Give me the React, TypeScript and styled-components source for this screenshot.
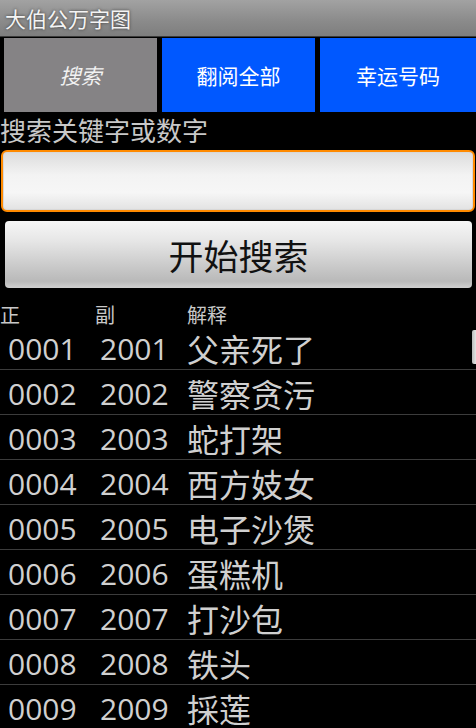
import { FC } from 'react';
import styled, { createGlobalStyle, css } from 'styled-components';

interface IEntry {
  main: string;
  sub: string;
  meaning: string;
}

const entries: IEntry[] = [
  { main: '0001', sub: '2001', meaning: '父亲死了' },
  { main: '0002', sub: '2002', meaning: '警察贪污' },
  { main: '0003', sub: '2003', meaning: '蛇打架' },
  { main: '0004', sub: '2004', meaning: '西方妓女' },
  { main: '0005', sub: '2005', meaning: '电子沙煲' },
  { main: '0006', sub: '2006', meaning: '蛋糕机' },
  { main: '0007', sub: '2007', meaning: '打沙包' },
  { main: '0008', sub: '2008', meaning: '铁头' },
  { main: '0009', sub: '2009', meaning: '採莲' },
];

const tabs = [
  { id: 'search', title: '搜索', active: true },
  { id: 'browse', title: '翻阅全部', active: false },
  { id: 'lucky', title: '幸运号码', active: false },
];

const GlobalStyle = createGlobalStyle`
  html, body {
    margin: 0;
    padding: 0;
    background: #000;
  }
  body {
    font-family: "Open Sans", "Noto Sans CJK SC", sans-serif;
    overflow: hidden;
  }
`;

const StyledScreen = styled.div`
  width: 476px;
  height: 728px;
  background: #000;
  overflow: hidden;
  position: relative;
`;

const StyledTitleBar = styled.div`
  height: 36px;
  display: flex;
  align-items: center;
  padding-left: 5px;
  background: linear-gradient(#a2a2a2, #8a8a8a 60%, #7e7e7e);
  border-bottom: 1px solid #3a3a3a;
  color: #f4f4f4;
  font-size: 21px;
  text-shadow: 0 0 3px #333;
`;

const StyledTabs = styled.div`
  display: grid;
  grid-template-columns: 153px 153px 156px;
  gap: 5px;
  padding: 1px 0 0 4px;
  height: 74px;
`;

const StyledTab = styled.div<{ $active?: boolean }>`
  display: flex;
  align-items: center;
  justify-content: center;
  color: #fff;
  font-size: 21px;
  background: #0058ff;

  ${({ $active }) =>
    $active &&
    css`
      background: #858385;
      font-style: italic;
      color: #f2f2f2;
    `}
`;

const StyledLabel = styled.div`
  color: #c8c8c8;
  font-size: 26px;
  line-height: 38px;
  height: 38px;
`;

const StyledInput = styled.div`
  height: 58px;
  margin: 0 1px;
  border: 2px solid #ff8a00;
  border-radius: 6px;
  background: linear-gradient(#dcdcdc, #f3f3f3 40%, #f6f6f6 70%, #e2e2e2);
  box-shadow: inset 0 0 0 1px #d8d8d8;
`;

const StyledButton = styled.div`
  margin: 9px 4px 0 5px;
  height: 67px;
  border-radius: 4px;
  display: flex;
  align-items: center;
  justify-content: center;
  font-size: 35px;
  color: #111;
  background: linear-gradient(#f6f6f6, #e6e6e6 30%, #c4c4c4 75%, #b9b9b9 90%, #cfcfcf);
`;

const StyledHeader = styled.div`
  display: grid;
  grid-template-columns: 95px 92px 1fr;
  margin-top: 12px;
  height: 25px;
  align-items: center;
  color: #c8c8c8;
  font-size: 20px;
`;

const StyledList = styled.div`
  position: relative;
`;

const StyledRow = styled.div`
  display: grid;
  grid-template-columns: 92px 87px 1fr;
  align-items: center;
  padding-left: 8px;
  height: 44px;
  border-bottom: 1px solid #3c3c3c;
  color: #d0d0d0;
  font-size: 30px;
  white-space: nowrap;
`;

const StyledMeaning = styled.span`
  font-size: 32px;
`;

const StyledScrollThumb = styled.div`
  position: absolute;
  top: 5px;
  right: 0;
  width: 4px;
  height: 34px;
  border-radius: 2px 0 0 2px;
  background: linear-gradient(90deg, #bbb, #e4e4e4);
`;

const App: FC = () => {
  return (
    <>
      <GlobalStyle />
      <StyledScreen>
        <StyledTitleBar>大伯公万字图</StyledTitleBar>
        <StyledTabs>
          {tabs.map((tab) => (
            <StyledTab key={tab.id} $active={tab.active}>
              {tab.title}
            </StyledTab>
          ))}
        </StyledTabs>
        <StyledLabel>搜索关键字或数字</StyledLabel>
        <StyledInput />
        <StyledButton>开始搜索</StyledButton>
        <StyledHeader>
          <span>正</span>
          <span>副</span>
          <span>解释</span>
        </StyledHeader>
        <StyledList>
          {entries.map((item) => (
            <StyledRow key={item.main}>
              <span>{item.main}</span>
              <span>{item.sub}</span>
              <StyledMeaning>{item.meaning}</StyledMeaning>
            </StyledRow>
          ))}
          <StyledScrollThumb />
        </StyledList>
      </StyledScreen>
    </>
  );
};

export default App;
